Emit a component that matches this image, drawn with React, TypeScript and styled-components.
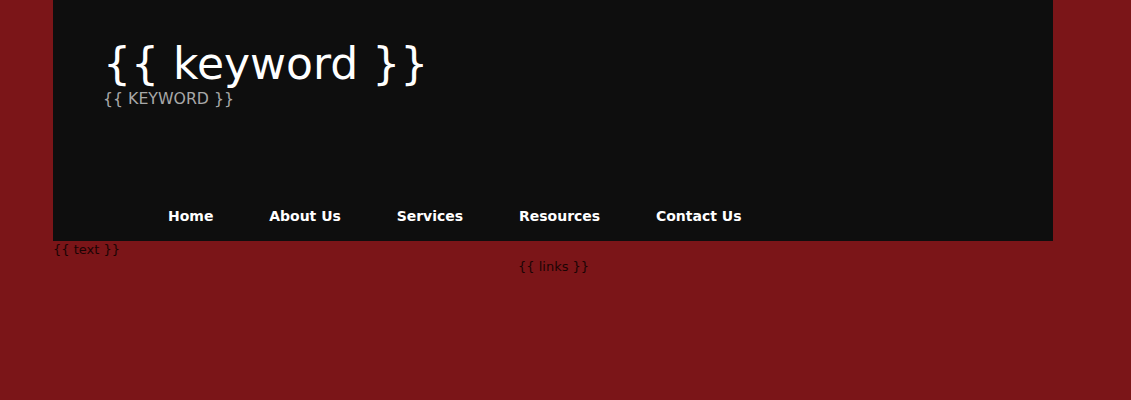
import React from "react";
import styled, { createGlobalStyle } from "styled-components";

const Global = createGlobalStyle`
  html, body { margin: 0; padding: 0; }
  body {
    background: #7b1518;
    font-family: "DejaVu Sans", sans-serif;
    min-height: 400px;
  }
`;

const Page = styled.div`
  width: 1000px;
  margin-left: 53px;
`;

const Header = styled.header`
  background: #0e0e0e;
  height: 241px;
  box-sizing: border-box;
  padding: 38px 0 0 50px;
  display: flex;
  flex-direction: column;
`;

const Title = styled.h1`
  margin: 0;
  font-size: 44px;
  font-weight: normal;
  color: #ffffff;
  line-height: 52px;
`;

const Subtitle = styled.h2`
  margin: 0;
  font-size: 15.75px;
  font-weight: normal;
  color: #a8a8a8;
  line-height: 18px;
`;

const Nav = styled.nav`
  display: flex;
  gap: 55.75px;
  margin-top: auto;
  margin-left: 65px;
  height: 50px;
  align-items: center;
`;

const NavLink = styled.a`
  color: #ffffff;
  font-weight: bold;
  font-size: 14px;
  text-decoration: none;
`;

const Body = styled.div`
  display: flex;
`;

const Text = styled.p`
  margin: 1px 0 0;
  font-size: 13px;
  color: #1a0404;
  width: 465px;
`;

const Links = styled.p`
  margin: 18px 0 0;
  font-size: 13px;
  color: #1a0404;
`;

export default function App() {
  return (
    <>
      <Global />
      <Page>
        <Header>
          <Title>{"{{ keyword }}"}</Title>
          <Subtitle>{"{{ KEYWORD }}"}</Subtitle>
          <Nav>
            <NavLink href="#">Home</NavLink>
            <NavLink href="#">About Us</NavLink>
            <NavLink href="#">Services</NavLink>
            <NavLink href="#">Resources</NavLink>
            <NavLink href="#">Contact Us</NavLink>
          </Nav>
        </Header>
        <Body>
          <Text>{"{{ text }}"}</Text>
          <Links>{"{{ links }}"}</Links>
        </Body>
      </Page>
    </>
  );
}
